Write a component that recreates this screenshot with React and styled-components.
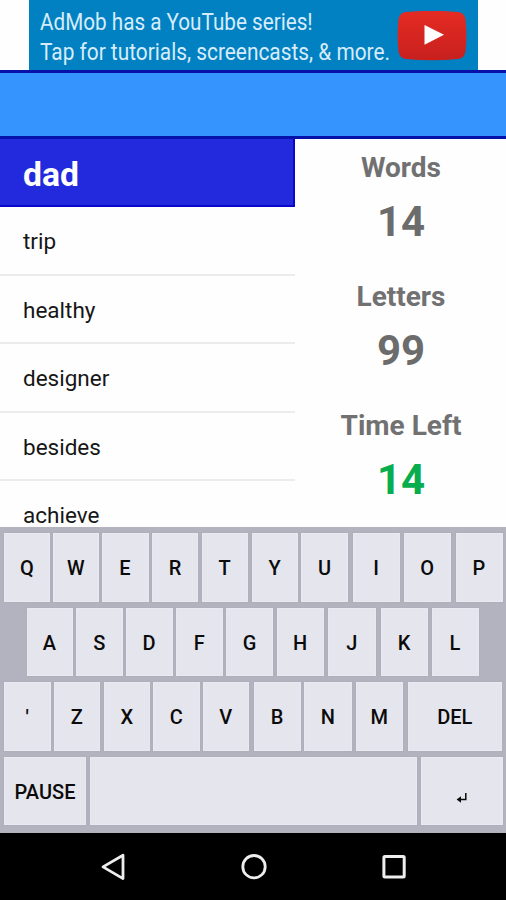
import React from 'react';
import styled, { createGlobalStyle } from 'styled-components';

const GlobalStyle = createGlobalStyle`
  * {
    box-sizing: border-box;
  }

  body {
    margin: 0;
    background: #fefefe;
    font-family: Roboto, 'Liberation Sans', sans-serif;
  }
`;

const Screen = styled.div`
  display: flex;
  flex-direction: column;
  width: 506px;
  height: 900px;
  overflow: hidden;
  background: #fefefe;
`;

const AdSlot = styled.div`
  height: 70px;
  padding: 0 28px 0 29px;
`;

const AdBanner = styled.div`
  display: flex;
  justify-content: space-between;
  height: 100%;
  padding: 11px 11px 0 11px;
  background: #0181c1;
`;

const AdText = styled.div`
  width: 350px;
`;

const AdLine = styled.div`
  width: max-content;
  height: 30px;
  margin-top: ${(p) => p.$offset || 0}px;
  color: #d7ecfa;
  font-size: 23.5px;
  line-height: 30px;
  white-space: nowrap;
  transform: scaleX(${(p) => p.$squeeze});
  transform-origin: left center;
`;

const TitleBar = styled.header`
  flex: none;
  height: 69px;
  background: #3694fe;
  border-top: 3px solid #0511a8;
  border-bottom: 3px solid #0511a8;
`;

const Game = styled.main`
  display: flex;
  flex: none;
  height: 388px;
  overflow: hidden;
`;

const WordList = styled.ul`
  width: 295px;
  margin: 0;
  padding: 0;
  list-style: none;
`;

const CurrentWord = styled.li`
  height: 68px;
  padding-left: 23px;
  background: #2329dd;
  border-right: 2px solid #0a06cb;
  border-bottom: 2px solid #0a06cb;
  color: #fff;
  font-size: 33.7px;
  font-weight: 700;
  line-height: 71px;
`;

const Word = styled.li`
  height: 68.6px;
  padding-left: 23px;
  border-bottom: 2px solid #ececec;
  color: #161616;
  font-size: 22.5px;
  line-height: 69px;

  &:last-child {
    height: 45px;
    padding-top: 21px;
    border-bottom: 0;
    line-height: 27px;
  }
`;

const Stats = styled.section`
  flex: 1;
  padding-top: 12px;
  text-align: center;
`;

const Stat = styled.div`
  height: 129px;
  padding-left: 1px;
`;

const StatLabel = styled.div`
  color: #717171;
  font-size: 28px;
  font-weight: 700;
  line-height: 34px;
`;

const StatValue = styled.div`
  margin-top: 12px;
  color: ${(p) => p.$color || '#6c6c6c'};
  font-size: 42px;
  font-weight: 700;
  line-height: 50px;
`;

const Keyboard = styled.div`
  display: flex;
  flex-direction: column;
  flex: none;
  gap: 6px;
  height: 306px;
  padding: 6px 0 0 4px;
  background: #b3b3bf;
`;

const KeyRow = styled.div`
  display: flex;
  height: 68.5px;
  padding-left: ${(p) => p.$indent || 0}px;
`;

const Key = styled.button`
  display: flex;
  align-items: center;
  justify-content: center;
  flex: none;
  width: ${(p) => p.$width}px;
  margin: 0 ${(p) => p.$gap}px 0 0;
  padding: 2px 0 0;
  border: 0;
  background: #e5e5ed;
  box-shadow: 0 0 1px 1px #b0b0bc, inset 0 0 1px 1px #e9e9f1;
  color: #0b0b0b;
  font-family: inherit;
  font-size: 20px;
  font-weight: 500;
`;

const EnterLabel = styled.span`
  display: flex;
  margin-top: 13px;
`;

const NavBar = styled.nav`
  display: flex;
  flex: 1;
  justify-content: space-between;
  padding: 18px 98px 0 99px;
  background: #000;
`;

const words = ['trip', 'healthy', 'designer', 'besides', 'achieve'];

// [label, width, gap to the next key]
const rows = [
  {
    keys: [
      ['Q', 46, 3],
      ['W', 45.5, 3],
      ['E', 47, 3.5],
      ['R', 46, 3.5],
      ['T', 46, 4],
      ['Y', 46, 3.5],
      ['U', 47, 4.5],
      ['I', 47, 4],
      ['O', 47.5, 4.5],
      ['P', 47, 0],
    ],
  },
  {
    indent: 22.5,
    keys: [
      ['A', 46, 3.5],
      ['S', 46.5, 3],
      ['D', 47, 3.5],
      ['F', 46.5, 3.5],
      ['G', 47, 3.5],
      ['H', 47, 4.5],
      ['J', 47.5, 5],
      ['K', 47, 4],
      ['L', 47, 0],
    ],
  },
  {
    keys: [
      ["'", 46.5, 3],
      ['Z', 46.5, 3.5],
      ['X', 46.5, 3],
      ['C', 46.5, 3],
      ['V', 46.5, 4.5],
      ['B', 47, 3.5],
      ['N', 47.5, 4],
      ['M', 47.5, 4.5],
      ['DEL', 94.5, 0],
    ],
  },
  {
    keys: [
      ['PAUSE', 82, 3.5],
      ['', 327.5, 3.5],
      ['enter', 82, 0],
    ],
  },
];

const YouTubeLogo = () => (
  <svg width="70" height="50" viewBox="0 0 70 50">
    <defs>
      <linearGradient id="yt" x1="0" y1="0" x2="0" y2="1">
        <stop offset="0" stopColor="#e42c23" />
        <stop offset="1" stopColor="#c8201e" />
      </linearGradient>
    </defs>
    <path
      d="M9 1Q35-1.400 61 1Q67.600 1.600 68.600 9Q70.200 24.500 68.600 40Q67.600 47.400 61 48Q35 50.400 9 48Q2.400 47.400 1.400 40Q-.2 24.500 1.400 9Q2.400 1.600 9 1Z"
      fill="url(#yt)"
    />
    <path d="M27.500 14L47 23.800L27.500 33.700Z" fill="#fff" />
  </svg>
);

const EnterIcon = () => (
  <svg width="12" height="12" viewBox="0 0 12 12">
    <path d="M9.800 1V7.500H3" fill="none" stroke="#0b0b0b" strokeWidth="1.500" />
    <path d="M.6 7.500L5 4.200V10.800Z" fill="#0b0b0b" />
  </svg>
);

export default function App() {
  return (
    <>
      <GlobalStyle />
      <Screen>
        <AdSlot>
          <AdBanner>
            <AdText>
              <AdLine $squeeze={0.88} $offset={-4}>AdMob has a YouTube series!</AdLine>
              <AdLine $squeeze={0.887}>Tap for tutorials, screencasts, &amp; more.</AdLine>
            </AdText>
            <YouTubeLogo />
          </AdBanner>
        </AdSlot>

        <TitleBar />

        <Game>
          <WordList>
            <CurrentWord>dad</CurrentWord>
            {words.map((word) => (
              <Word key={word}>{word}</Word>
            ))}
          </WordList>
          <Stats>
            <Stat>
              <StatLabel>Words</StatLabel>
              <StatValue>14</StatValue>
            </Stat>
            <Stat>
              <StatLabel>Letters</StatLabel>
              <StatValue>99</StatValue>
            </Stat>
            <Stat>
              <StatLabel>Time Left</StatLabel>
              <StatValue $color="#08ad4e">14</StatValue>
            </Stat>
          </Stats>
        </Game>

        <Keyboard>
          {rows.map((row, i) => (
            <KeyRow key={i} $indent={row.indent}>
              {row.keys.map(([label, width, gap]) => (
                <Key key={label} $width={width} $gap={gap}>
                  {label === 'enter' ? <EnterLabel><EnterIcon /></EnterLabel> : label}
                </Key>
              ))}
            </KeyRow>
          ))}
        </Keyboard>

        <NavBar>
          <svg width="28" height="32" viewBox="0 0 28 32">
            <path d="M24 4.200V27.600L4 15.900Z" fill="none" stroke="#eee" strokeWidth="2.800" strokeLinejoin="round" />
          </svg>
          <svg width="28" height="32" viewBox="0 0 28 32">
            <circle cx="14" cy="15.700" r="11.200" fill="none" stroke="#eee" strokeWidth="2.800" />
          </svg>
          <svg width="28" height="32" viewBox="0 0 28 32">
            <rect x="3.900" y="5.600" width="20.300" height="20.300" rx="1" fill="none" stroke="#eee" strokeWidth="3" />
          </svg>
        </NavBar>
      </Screen>
    </>
  );
}
